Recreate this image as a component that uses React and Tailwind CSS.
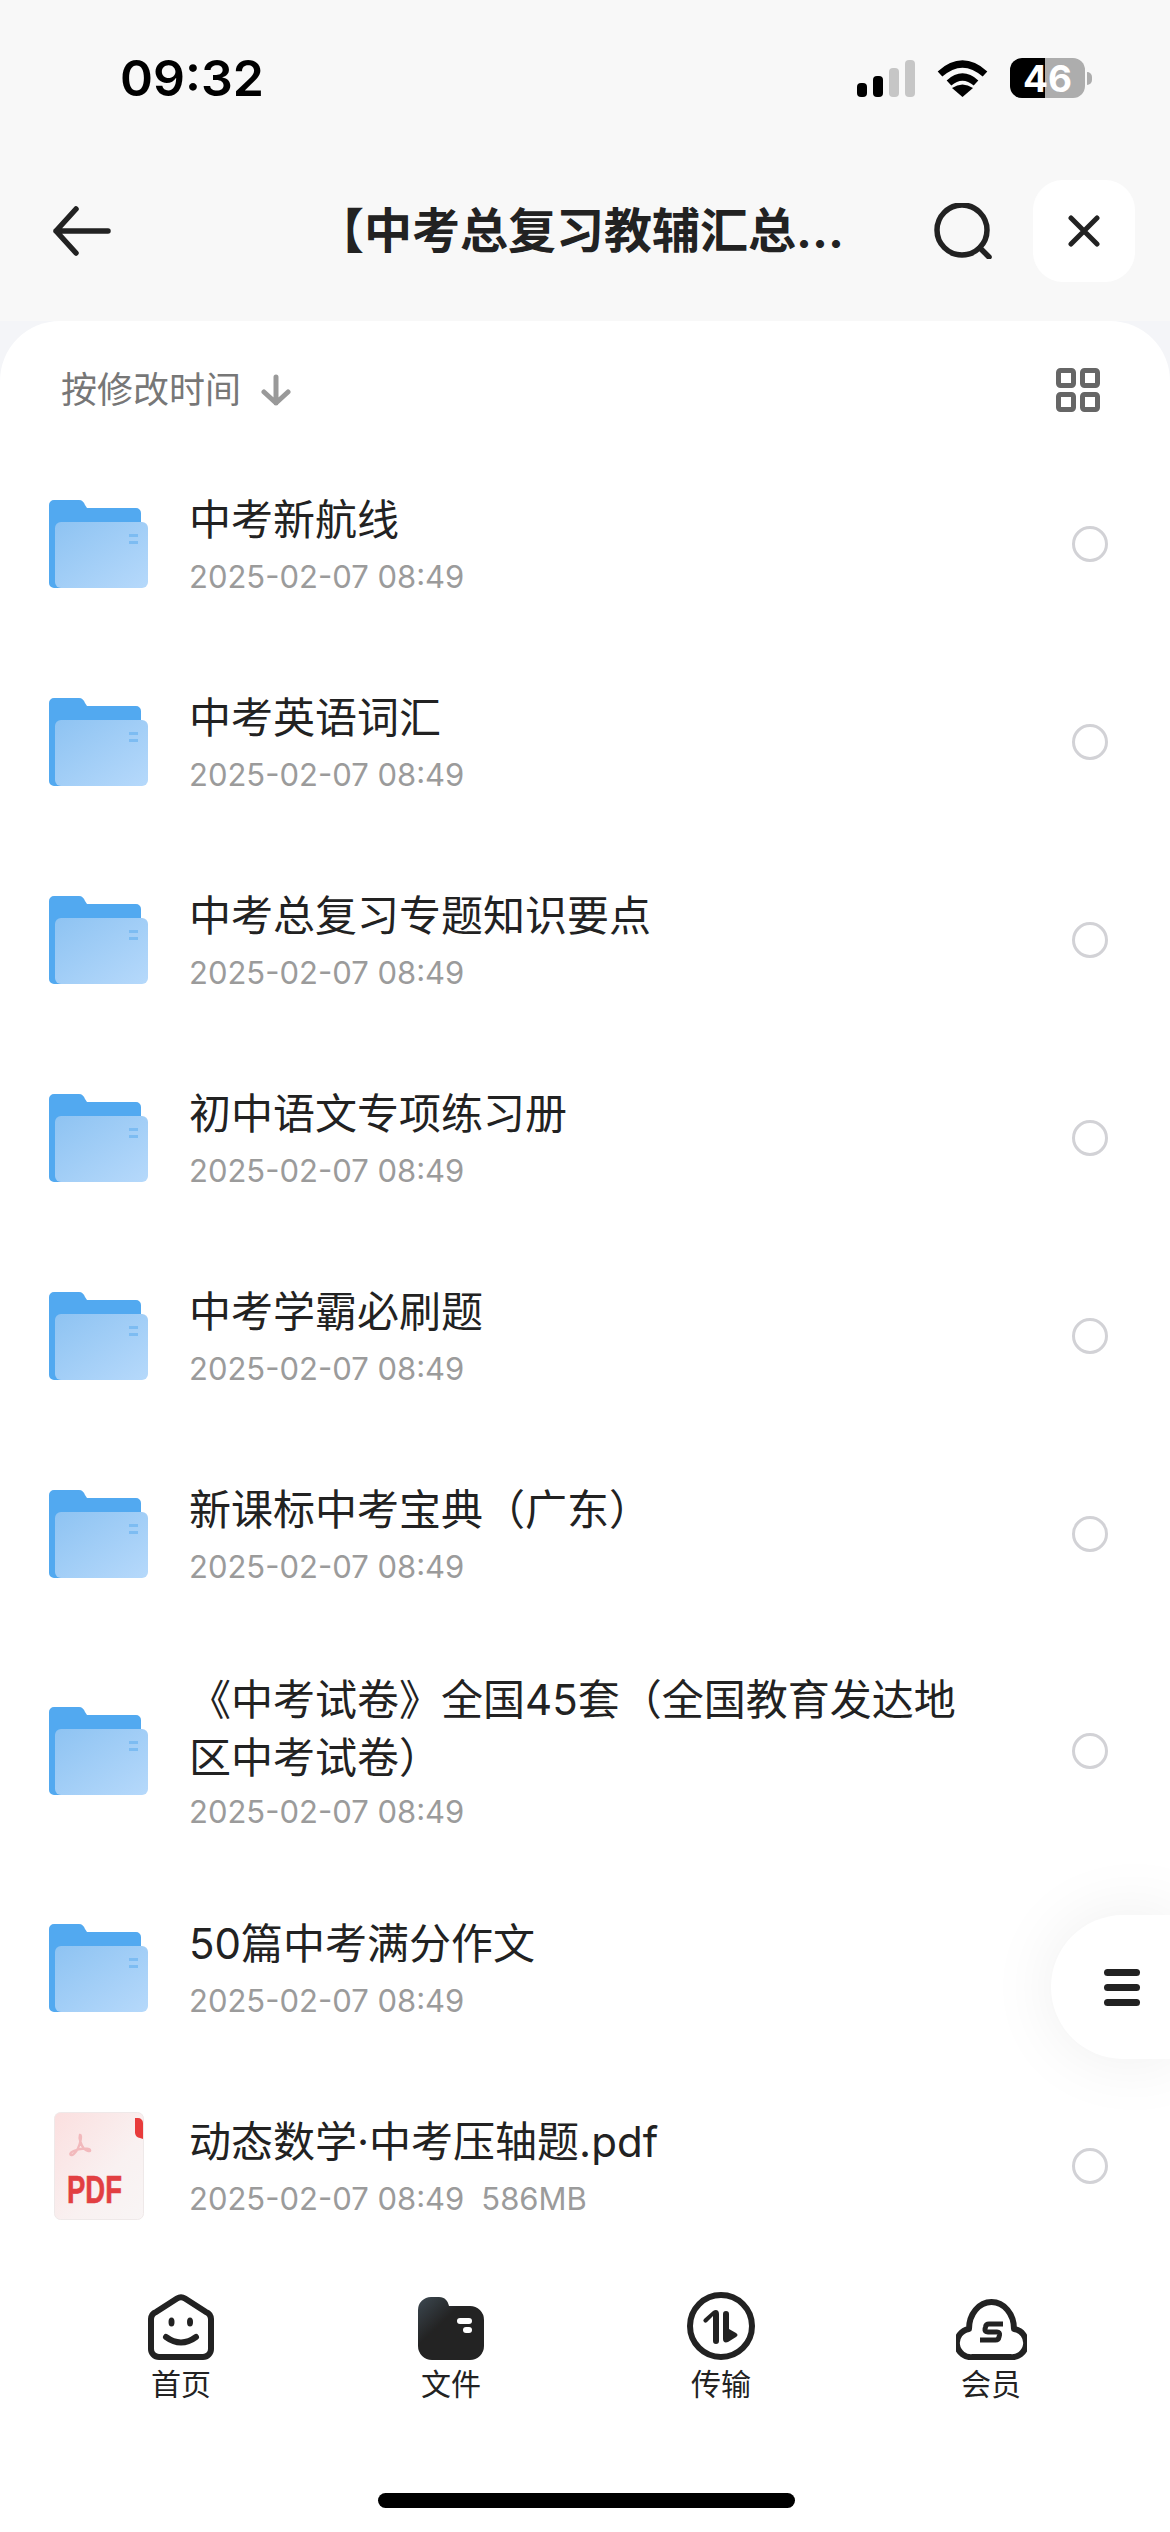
const font = { cjk: "font-['Inter','Noto_Sans_CJK_SC',sans-serif]" };

const rows = [
  { name: "中考新航线" },
  { name: "中考英语词汇" },
  { name: "中考总复习专题知识要点" },
  { name: "初中语文专项练习册" },
  { name: "中考学霸必刷题" },
  { name: "新课标中考宝典（广东）" },
  { name: "《中考试卷》全国45套（全国教育发达地区中考试卷）" },
  { name: "50篇中考满分作文" },
  { name: "动态数学·中考压轴题.pdf", size: "586MB", pdf: true },
];

function FolderIcon() {
  return (
    <svg width="99" height="88" viewBox="0 0 99 88">
      <defs>
        <linearGradient id="folderFront" x1="0" y1="0" x2="1" y2="1">
          <stop offset="0" stopColor="#8ec3f2" />
          <stop offset="1" stopColor="#b6d9fb" />
        </linearGradient>
      </defs>
      <path d="M0 5a5 5 0 0 1 5-5h25c3 0 5 2 6 5l2 3h49a5 5 0 0 1 5 5v70a5 5 0 0 1-5 5H5a5 5 0 0 1-5-5z" fill="#52a9f0" />
      <rect x="6" y="22" width="93" height="66" rx="6" fill="url(#folderFront)" />
      <rect x="80" y="34" width="9" height="3" fill="#7dbcf2" />
      <rect x="80" y="41" width="9" height="3" fill="#7dbcf2" />
    </svg>
  );
}

function PdfIcon() {
  return (
    <svg width="90" height="108" viewBox="0 0 90 108">
      <defs>
        <linearGradient id="pdfBg" x1="0" y1="0" x2="1" y2="1">
          <stop offset="0" stopColor="#fbdfdf" />
          <stop offset="0.6" stopColor="#f9f1f1" />
          <stop offset="1" stopColor="#f9f5f5" />
        </linearGradient>
      </defs>
      <rect x="0.5" y="0.5" width="89" height="107" rx="6" fill="url(#pdfBg)" stroke="#efe9e9" />
      <path d="M81 6h3a5 5 0 0 1 5 5v16l-3-1a6 6 0 0 1-5-5z" fill="#e83c3c" />
      <g transform="translate(11 12) scale(0.68)">
        <path d="M22 16c3 0 1 12-3 20-3 6-9 12-11 9-2-3 8-8 20-9 4 0 9 1 9 3s-6 1-10-4c-3-4-7-14-5-19z" fill="none" stroke="#f2b9bc" strokeWidth="3.500" />
      </g>
      <text x="13" y="91" fontFamily="'Liberation Sans', sans-serif" fontWeight="700" fontSize="39" fill="#e23f42" stroke="#e23f42" strokeWidth="0.6" textLength="55" lengthAdjust="spacingAndGlyphs">PDF</text>
    </svg>
  );
}

function Row({ row }) {
  return (
    <div className="flex items-center py-[37.5px] pl-[49px] min-h-[198px]">
      <div className="w-[99px] shrink-0 flex justify-center">
        {row.pdf ? <PdfIcon /> : <FolderIcon />}
      </div>
      <div className="ml-[41px] w-[790px]">
        <div className="min-h-[64px] pb-[3px] text-[42px] leading-[58px] text-[#222]">{row.name}</div>
        <div className="mt-[2px] flex gap-[17px] text-[31px] leading-[40px] text-[#9b9b9b]">
          <span>2025-02-07 08:49</span>
          {row.size && <span>{row.size}</span>}
        </div>
      </div>
      <div className="ml-auto mr-[62px] w-[36px] h-[36px] rounded-full border-[3px] border-[#d2d2d6] shrink-0" />
    </div>
  );
}

function StatusBar() {
  return (
    <div className="h-[156px] flex items-center pl-[120px] pr-[78px]">
      <span className="font-['Inter',sans-serif] text-[50px] font-semibold text-black">09:32</span>
      <div className="ml-auto flex items-center">
        <div className="flex items-end gap-[6px] h-[37px]">
          <div className="w-[10px] h-[14px] rounded-[4px] bg-black" />
          <div className="w-[10px] h-[21px] rounded-[4px] bg-black" />
          <div className="w-[10px] h-[29px] rounded-[4px] bg-[#c6c6c6]" />
          <div className="w-[10px] h-[37px] rounded-[4px] bg-[#c6c6c6]" />
        </div>
        <svg className="ml-[22px]" width="51" height="37" viewBox="0 0 51 37">
          <path d="M3 14Q25.5-6 48 14" fill="none" stroke="#000" strokeWidth="7" />
          <path d="M12 23Q25.5 11 39 23" fill="none" stroke="#000" strokeWidth="7" />
          <path d="M25.5 37L15 28Q25.5 21 36 28Z" fill="#000" />
        </svg>
        <div className="ml-[22px] w-[75px] h-[40px] rounded-[12px] bg-[linear-gradient(90deg,#000_47%,#adadad_47%)] flex items-center justify-center font-['Inter',sans-serif] text-[37px] font-bold leading-none text-white">
          46
        </div>
        <div className="ml-[2px] w-[5px] h-[13px] rounded-r-full bg-[#adadad]" />
      </div>
    </div>
  );
}

function Header() {
  return (
    <div className="mt-[24px] h-[102px] flex items-center pl-[53px] pr-[35px]">
      <svg width="58" height="50" viewBox="0 0 58 50" fill="none" stroke="#222" strokeWidth="5.5" strokeLinecap="round" strokeLinejoin="round">
        <path d="M55 25H3M23 3L3 25l20 22" />
      </svg>
      <div className="ml-[205px] text-[48px] font-bold leading-none text-[#222] whitespace-nowrap">【中考总复习教辅汇总...</div>
      <svg className="ml-auto" width="60" height="56" viewBox="0 0 60 56" fill="none" stroke="#222" strokeWidth="5.5" strokeLinecap="round">
        <circle cx="29" cy="27" r="25" />
        <path d="M47 45l9 9" />
      </svg>
      <div className="ml-[40px] w-[102px] h-[102px] rounded-[30px] bg-white flex items-center justify-center">
        <svg width="32" height="32" viewBox="0 0 32 32" fill="none" stroke="#222" strokeWidth="5" strokeLinecap="round">
          <path d="M3 3l26 26M29 3L3 29" />
        </svg>
      </div>
    </div>
  );
}

function SortBar() {
  return (
    <div className="h-[124px] pt-[14px] flex items-center pl-[61px] pr-[70px]">
      <span className="text-[36px] text-[#777]">按修改时间</span>
      <svg className="ml-[20px]" width="30" height="32" viewBox="0 0 30 32" fill="none" stroke="#999" strokeWidth="5" strokeLinecap="round" strokeLinejoin="round">
        <path d="M15 3v26M3 18l12 11 12-11" />
      </svg>
      <svg className="ml-auto" width="44" height="44" viewBox="0 0 44 44" fill="none" stroke="#666" strokeWidth="5">
        <rect x="2.5" y="2.5" width="15" height="15" rx="2" />
        <rect x="26.5" y="2.5" width="15" height="15" rx="2" />
        <rect x="2.5" y="26.5" width="15" height="15" rx="2" />
        <rect x="26.5" y="26.5" width="15" height="15" rx="2" />
      </svg>
    </div>
  );
}

function HomeIcon() {
  return (
    <svg width="66" height="66" viewBox="0 0 66 66" fill="none" stroke="#222" strokeWidth="6" strokeLinecap="round" strokeLinejoin="round">
      <path d="M29 4.5a7.5 7.5 0 0 1 8 0L58 18a8 8 0 0 1 5 7v30a8 8 0 0 1-8 8H11a8 8 0 0 1-8-8V25a8 8 0 0 1 5-7z" />
      <ellipse cx="23.5" cy="28" rx="3" ry="4.5" fill="#222" stroke="none" />
      <ellipse cx="42" cy="28" rx="3" ry="4.5" fill="#222" stroke="none" />
      <path d="M18 43Q33 54 48 43" />
    </svg>
  );
}

function FilesIcon() {
  return (
    <svg width="66" height="63" viewBox="0 0 66 63">
      <defs>
        <linearGradient id="filesBg" x1="0" y1="0" x2="0.7" y2="0.7">
          <stop offset="0" stopColor="#3d4952" />
          <stop offset="0.55" stopColor="#232323" />
        </linearGradient>
      </defs>
      <path d="M0 13A13 13 0 0 1 13 0h8c6 0 9 4 10 9h21a14 14 0 0 1 14 14v26a14 14 0 0 1-14 14H14A14 14 0 0 1 0 49z" fill="url(#filesBg)" />
      <rect x="39" y="21" width="15" height="6" rx="3" fill="#fff" />
      <rect x="45" y="30" width="9" height="6" rx="3" fill="#fff" />
    </svg>
  );
}

function TransferIcon() {
  return (
    <svg width="68" height="68" viewBox="0 0 68 68">
      <circle cx="34" cy="34" r="31" fill="none" stroke="#222" strokeWidth="6" />
      <path d="M26 49V24l-6 6a2 2 0 0 1-3-3l9-8c3-2 6-1 6 3v27a3 3 0 0 1-6 0z" fill="#222" />
      <path d="M36 22a3 3 0 0 1 6 0v15l7 4c2 1 2 3 0 4l-8 5c-3 1-5 0-5-3z" fill="#222" />
    </svg>
  );
}

function MemberIcon() {
  return (
    <svg width="71" height="61" viewBox="0 0 71 61" fill="none" stroke="#222" strokeWidth="6" strokeLinejoin="round">
      <path d="M17 58h37a14 14 0 0 0 4-28c0-15-10-27-22.500-27S13 15 13 30a14 14 0 0 0 4 28z" />
      <path d="M47 25H33q-3 0-3.500 3l-.5 2q-.5 3 3 3h9q3 0 2.500 3l-.5 2q-.5 3-3.500 3H24" strokeWidth="5" />
    </svg>
  );
}

function Tab({ icon, label }) {
  return (
    <div className="flex flex-col items-center">
      <div className="h-[70px] flex items-end">{icon}</div>
      <span className="mt-[4px] text-[30px] leading-[40px] text-[#222]">{label}</span>
    </div>
  );
}

function BottomNav() {
  return (
    <div className="flex-1 flex flex-col bg-white pt-[25px]">
      <div className="grid grid-cols-4 w-[1080px] ml-[46px]">
        <Tab icon={<HomeIcon />} label="首页" />
        <Tab icon={<FilesIcon />} label="文件" />
        <Tab icon={<TransferIcon />} label="传输" />
        <Tab icon={<MemberIcon />} label="会员" />
      </div>
      <div className="mt-auto mb-[24px] ml-[378px] w-[417px] h-[15px] rounded-full bg-black" />
    </div>
  );
}

export default function App() {
  return (
    <div className={`relative w-[1170px] h-[2532px] overflow-hidden flex flex-col bg-[#f8f8f8] ${font.cjk}`}>
      <StatusBar />
      <Header />
      <div className="mt-[39px] flex-1 flex flex-col bg-[#f4f5f8]">
        <div className="flex-1 flex flex-col bg-white rounded-t-[60px]">
          <SortBar />
          {rows.map((r) => <Row key={r.name} row={r} />)}
          <BottomNav />
        </div>
      </div>
      <div className="absolute left-[1051px] top-[1915px] w-[130px] h-[144px] rounded-l-[72px] bg-white shadow-[0_0_70px_rgba(0,0,0,0.07)] flex flex-col justify-center gap-[8px] pl-[53px]">
        <div className="w-[36px] h-[7px] rounded-full bg-[#222]" />
        <div className="w-[36px] h-[7px] rounded-full bg-[#222]" />
        <div className="w-[36px] h-[7px] rounded-full bg-[#222]" />
      </div>
    </div>
  );
}
